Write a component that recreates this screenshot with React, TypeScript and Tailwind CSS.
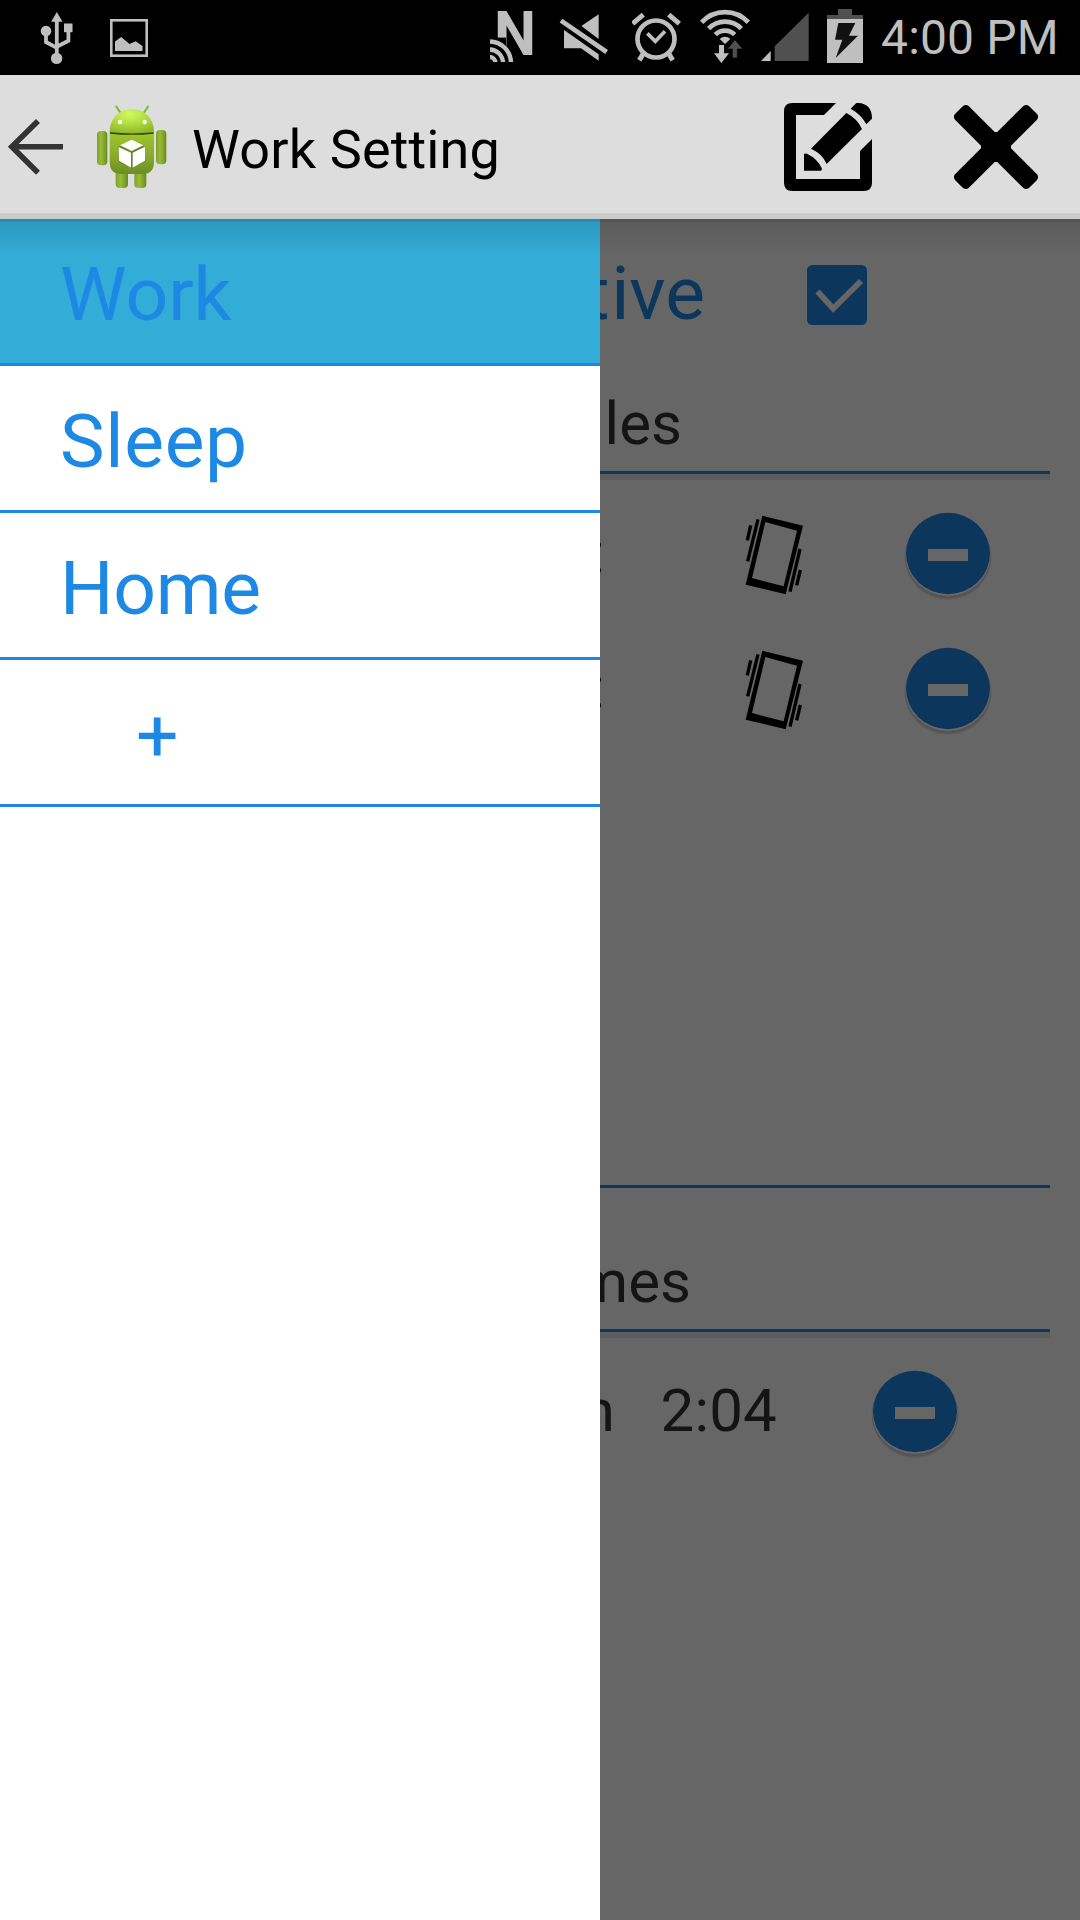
import React from "react";

const G = "#bfbfbf";
const D = "#505050";

function StatusBar() {
  return (
    <header className="flex h-[75px] w-full items-start bg-black">
      <svg className="ml-[39px] mt-[10px] h-[56px] w-[35px] shrink-0" viewBox="39 10 35 56">
        <path d="M56.8 12L62.5 21.8H51.2Z" fill={G} />
        <path d="M56.8 20V56M46 31V42L56.8 47.8M68.4 30V40.8L56.8 46.8" fill="none" stroke={G} strokeWidth="3.8" />
        <circle cx="46" cy="31" r="5.3" fill={G} />
        <rect x="64" y="23.5" width="8.5" height="8.7" fill={G} />
        <circle cx="56.6" cy="58.4" r="5.7" fill={G} />
      </svg>
      <svg className="ml-[36px] mt-[19px] h-[38px] w-[38px] shrink-0" viewBox="110 19 38 38">
        <rect x="111.3" y="20.3" width="35.4" height="35.4" fill="none" stroke={G} strokeWidth="2.6" />
        <path d="M115 51V41.5L121.2 37L129.5 44L135.7 41.3L142.5 46V51Z" fill={G} />
      </svg>

      <svg className="ml-[342px] mt-0 h-[75px] w-[50px] shrink-0" viewBox="490 0 50 75">
        <text x="494" y="55" fontSize="60.5" fontWeight="700" fill={G} textLength="42" lengthAdjust="spacingAndGlyphs" className="font-['Roboto',sans-serif]">N</text>
        <rect x="490" y="37.6" width="16.2" height="24.4" fill="#000" />
        <circle cx="489.5" cy="63" r="24.3" fill="#000" />
        <g fill="none" stroke={G} strokeWidth="4.4">
          <circle cx="489.5" cy="63" r="6" />
          <circle cx="489.5" cy="63" r="13.5" />
          <circle cx="489.5" cy="63" r="21.5" />
        </g>
        <rect x="490" y="62" width="30" height="13" fill="#000" />
      </svg>
      <svg className="ml-[17px] mt-[10px] h-[54px] w-[54px] shrink-0" viewBox="261 30 162 162">
        <path d="M334 78L386 43V117ZM282 90L386 163V182L333 145H282Z" fill={G} />
        <path d="M273 62L410 156" stroke={G} strokeWidth="14" />
      </svg>
      <svg className="ml-[21px] mt-[10px] h-[54px] w-[54px] shrink-0" viewBox="486 30 162 162">
        <g fill="none" stroke={G}>
          <circle cx="558" cy="117" r="55.5" strokeWidth="14" />
          <path d="M532 100L556 124L585 94" strokeWidth="11" />
          <path d="M488 71L520 44M596 44L628 71" strokeWidth="15" />
          <path d="M519 162L508 181M597 162L608 181" strokeWidth="15" />
        </g>
      </svg>
      <svg className="ml-[13px] mt-[9px] h-[55px] w-[54px] shrink-0" viewBox="687 27 162 165">
        <g fill="none" stroke={G} strokeWidth="14">
          <path d="M695 67A95 95 0 0 1 835 67" />
          <path d="M716 86A67 67 0 0 1 814 86" />
          <path d="M736 104A41 41 0 0 1 794 104" />
        </g>
        <path d="M765 132L749 117A22 22 0 0 1 781 117Z" fill={G} />
        <path d="M747 135H762V160H777L754 189L732 160H747Z" fill={G} />
        <path d="M795 119L818 147H802V174H787V147H772Z" fill={D} stroke="#000" strokeWidth="2" />
      </svg>
      <svg className="ml-[8px] mt-[10px] h-[54px] w-[48px] shrink-0" viewBox="4 30 144 162">
        <path d="M4 183L33 153V183Z" fill={G} />
        <path d="M45 183V139L147 38V183Z" fill={D} />
      </svg>
      <svg className="ml-[18px] mt-[9px] h-[54px] w-[36px] shrink-0" viewBox="201 27 108 162">
        <path d="M234 27H276V45H309V57H201V45H234Z" fill={D} />
        <rect x="201" y="57" width="108" height="132" fill={G} />
        <path d="M235 69H286L267 107H294L227 174L247 119H225Z" fill="#111" />
      </svg>
      <span className="ml-[18px] mt-[8.5px] whitespace-nowrap text-[48px] leading-[58px] tracking-[0.15px] text-[#bfbfbf]">4:00 PM</span>
    </header>
  );
}

function AndroidLogo() {
  return (
    <svg className="h-[86px] w-[74px] shrink-0" viewBox="45 45 222 258">
      <defs>
        <linearGradient id="body" x1="0" y1="0" x2="0" y2="1">
          <stop offset="0" stopColor="#a0c62c" />
          <stop offset="0.6" stopColor="#86a92a" />
          <stop offset="1" stopColor="#6c8c26" />
        </linearGradient>
        <radialGradient id="head" cx="0.45" cy="0.2" r="0.8">
          <stop offset="0" stopColor="#d2fa62" />
          <stop offset="0.5" stopColor="#b0dc40" />
          <stop offset="1" stopColor="#8fb62a" />
        </radialGradient>
        <linearGradient id="limb" x1="0" y1="0" x2="1" y2="0">
          <stop offset="0" stopColor="#7f9f2c" />
          <stop offset="0.4" stopColor="#9abd36" />
          <stop offset="1" stopColor="#6a8a22" />
        </linearGradient>
      </defs>
      <path d="M109 50L121 68M204 50L192 68" stroke="#8fb335" strokeWidth="6" strokeLinecap="round" />
      <rect x="107" y="225" width="37" height="69" rx="12" fill="url(#limb)" />
      <rect x="163" y="225" width="36" height="69" rx="12" fill="url(#limb)" />
      <rect x="51" y="123" width="31" height="103" rx="12" fill="url(#limb)" />
      <rect x="228" y="120" width="31" height="103" rx="12" fill="url(#limb)" />
      <path d="M89 128H222V216Q222 252 188 252H123Q89 252 89 216Z" fill="url(#body)" />
      <path d="M89 128C89 84 118 58 155 58C193 58 222 84 222 128Q155 136 89 128Z" fill="url(#head)" />
      <path d="M90 129Q155 136 221 129" stroke="#35470f" strokeWidth="4" fill="none" />
      <circle cx="120" cy="96" r="6.5" fill="#fff" />
      <circle cx="194" cy="96" r="6.5" fill="#fff" />
      <path d="M155 151L194 169L196 214L156 236L117 216L115 170Z" fill="#5c7a1e" opacity="0.75" />
      <path d="M155 149L190 166L155 183L120 166ZM116 171L153 188V233L117 212ZM158 188L195 170V212L158 233Z" fill="#fff" />
    </svg>
  );
}

function ActionBar() {
  return (
    <div className="flex h-[144px] w-full items-start border-b-[6px] border-[#cbcbcb] bg-[#dddddd]">
      <svg className="ml-[6px] mt-[42px] h-[60px] w-[60px] shrink-0" viewBox="6 117 60 60">
        <path d="M11 146.8H63M38 121L11.8 146.8L38 172.8" fill="none" stroke="#333" strokeWidth="5.6" />
      </svg>
      <div className="ml-[29px] mt-[30px] flex">
        <AndroidLogo />
      </div>
      <h1 className="ml-[23px] mt-[43px] w-[500px] whitespace-nowrap text-[54px] leading-[64px] tracking-[0.15px] text-black">Work Setting</h1>
      <svg className="ml-[92px] mt-[28px] h-[88px] w-[88px] shrink-0" viewBox="72 69 264 264">
        <path d="M228 69H97Q72 69 72 94V308Q72 333 97 333H311Q336 333 336 308V177L300 213V297H108V105H192Z" fill="#000" />
        <path d="M153 206L259 99Q291 115 306 147L200 252Q188 222 153 206ZM132 272V222Q134 219 141 221Q172 236 185 264Q187 272 182 272ZM272 86L289 69Q312 68 325 81Q336 93 336 116L319 133Q303 103 272 86Z" fill="#000" />
      </svg>
      <svg className="ml-[82px] mt-[30px] h-[84px] w-[84px] shrink-0" viewBox="582 75 252 252">
        <g transform="rotate(45 708 201)">
          <rect x="551" y="172" width="314" height="58" rx="13" />
          <rect x="679" y="44" width="58" height="314" rx="13" />
        </g>
        <rect x="663" y="156" width="90" height="90" />
      </svg>
    </div>
  );
}

function Vibrate() {
  return (
    <svg className="h-[80px] w-[58px] shrink-0" viewBox="466 75 174 240">
      <path fillRule="evenodd" d="M518 77L640 107L588 313L468 284ZM527 96L487 264L582 289L622 122Z" />
      <path d="M505 88L474 214M483 106L473 151M631 177L601 305M632 240L621 286" stroke="#000" strokeWidth="10" />
    </svg>
  );
}

function Remove() {
  return (
    <svg className="h-[90px] w-[90px] shrink-0" viewBox="0 0 90 90">
      <ellipse cx="45" cy="46" rx="43.5" ry="43" fill="#5f5e5e" />
      <ellipse cx="45" cy="45.5" rx="43" ry="42" fill="#555353" />
      <ellipse cx="45" cy="43.5" rx="42.5" ry="41.5" fill="#6a6868" />
      <ellipse cx="45" cy="42.5" rx="42" ry="40.7" fill="#0c365c" />
      <rect x="25" y="38" width="40" height="12" fill="#666" />
    </svg>
  );
}

function ProfileRow() {
  return (
    <div className="flex h-[135px] items-start">
      <span className="w-[605px] pt-[38px] text-right text-[60px] leading-[70px] text-[#141414]">2:</span>
      <div className="ml-[140px] mt-[35px] flex">
        <Vibrate />
      </div>
      <div className="ml-[100px] mt-[31px] flex">
        <Remove />
      </div>
    </div>
  );
}

function Content() {
  return (
    <main className="flex h-full w-[1050px] flex-col">
      <div className="flex h-[147px] items-start">
        <span className="w-[705px] pt-[30px] text-right text-[75px] leading-[88px] text-[#0c365c]"><span className="tracking-[1.5px]">Act</span>ive</span>
        <svg className="ml-[102px] mt-[46px] h-[60px] w-[60px] shrink-0" viewBox="0 0 60 60">
          <rect width="60" height="60" rx="5.5" fill="#0c365c" />
          <path d="M10.5 26.5L26.2 43.5L54 16" fill="none" stroke="#666" strokeWidth="5.8" />
        </svg>
      </div>
      <div className="h-[114px] border-b-[6px] border-[#5c5c5c]">
        <div className="h-[108px] border-b-[3px] border-[#0c365c]">
          <p className="w-[682px] pt-[23px] text-right text-[60px] leading-[70px] text-[#141414]">Profiles</p>
        </div>
      </div>
      <div className="flex h-[708px] flex-col border-b-[3px] border-[#0c365c]">
        <ProfileRow />
        <ProfileRow />
      </div>
      <div className="h-[150px] border-b-[6px] border-[#5c5c5c]">
        <div className="h-[144px] border-b-[3px] border-[#0c365c]">
          <p className="w-[691px] pt-[59px] text-right text-[60px] leading-[70px] text-[#141414]">Times</p>
        </div>
      </div>
      <div className="flex items-start">
        <span className="w-[615px] pt-[38px] text-right text-[60px] leading-[70px] text-[#141414]">Sun</span>
        <span className="w-[162px] pt-[38px] text-right text-[60px] leading-[70px] tracking-[0.2px] text-[#141414]">2:04</span>
        <div className="ml-[93px] mt-[31px] flex">
          <Remove />
        </div>
      </div>
    </main>
  );
}

function Drawer() {
  return (
    <nav className="absolute left-0 top-0 flex h-full w-[600px] flex-col bg-white text-[75px] leading-[88px] text-[#1e88e5]">
      <div className="h-[147px] border-b-[3px] border-[#1e88e5] bg-[#33acd7] pl-[60px] pt-[31px]">Work</div>
      <div className="h-[147px] border-b-[3px] border-[#1e88e5] pl-[60px] pt-[31px] tracking-[0.7px]">Sleep</div>
      <div className="h-[147px] border-b-[3px] border-[#1e88e5] pl-[60px] pt-[31px] tracking-[-0.3px]">Home</div>
      <div className="h-[147px] border-b-[3px] border-[#1e88e5] pl-[136px] pt-[31px]">+</div>
    </nav>
  );
}

export default function App() {
  return (
    <div className="flex h-[1920px] w-[1080px] flex-col overflow-hidden bg-[#666666] font-['Roboto',sans-serif]">
      <StatusBar />
      <ActionBar />
      <div className="relative min-h-0 flex-1">
        <Content />
        <Drawer />
        <div className="absolute left-0 top-0 h-[3px] w-full bg-black/8" />
        <div className="absolute left-0 top-0 h-[36px] w-full bg-linear-to-b from-black/12 to-transparent" />
      </div>
    </div>
  );
}
